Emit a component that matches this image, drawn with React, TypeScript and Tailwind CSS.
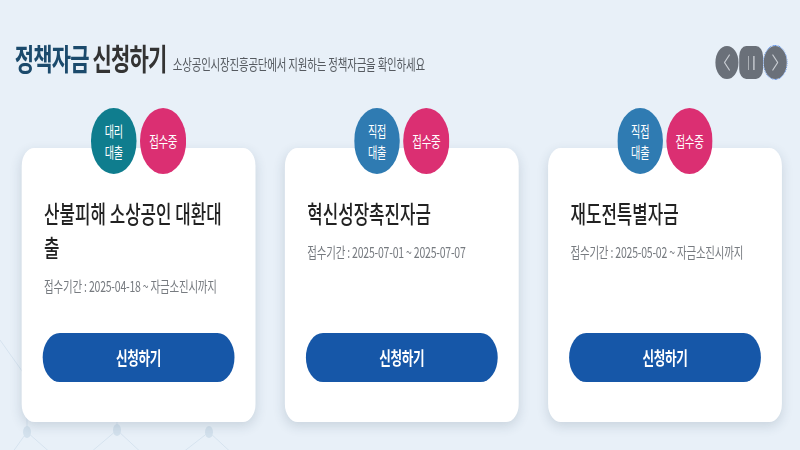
import React from "react";

type Card = {
  type: React.ReactNode;
  typeColor: string;
  title: React.ReactNode;
  period: string;
};

const cards: Card[] = [
  {
    type: (
      <>
        대리
        <br />
        대출
      </>
    ),
    typeColor: "bg-[#0f7d8e]",
    title: (
      <>
        산불피해 소상공인 대환대
        <br />출
      </>
    ),
    period: "접수기간 : 2025-04-18 ~ 자금소진시까지",
  },
  {
    type: (
      <>
        직접
        <br />
        대출
      </>
    ),
    typeColor: "bg-[#2f7bb2]",
    title: "혁신성장촉진자금",
    period: "접수기간 : 2025-07-01 ~ 2025-07-07",
  },
  {
    type: (
      <>
        직접
        <br />
        대출
      </>
    ),
    typeColor: "bg-[#2f7bb2]",
    title: "재도전특별자금",
    period: "접수기간 : 2025-05-02 ~ 자금소진시까지",
  },
];

function Chevron({ dir }: { dir: "left" | "right" }) {
  return (
    <svg width="11" height="17" viewBox="0 0 11 17" fill="none">
      <path
        d={dir === "left" ? "M9 1 L2 8.5 L9 16" : "M2 1 L9 8.5 L2 16"}
        stroke="#c8ccd2"
        strokeWidth="1.4"
        strokeLinecap="round"
        strokeLinejoin="round"
      />
    </svg>
  );
}

export default function App() {
  return (
    <div
      className="relative w-[800px] h-[450px] overflow-hidden bg-[#e8f0f8]"
      style={{ fontFamily: '"Noto Sans CJK KR", "Noto Sans", sans-serif' }}
    >
      <svg
        className="absolute inset-0"
        width="800"
        height="450"
        viewBox="0 0 800 450"
        fill="none"
      >
        <g stroke="#d6e3ef" strokeWidth="1">
          <path d="M0 340 L27 378 L27 432 L0 470" />
          <path d="M27 432 L70 470" />
          <path d="M117 430 L70 470" />
          <path d="M117 430 L160 470" />
          <path d="M209 432 L160 470" />
          <path d="M209 432 L250 470" />
          <path d="M117 430 L117 395" />
        </g>
        <g fill="#d3e1ed">
          <ellipse cx="27" cy="432" rx="4" ry="6" />
          <ellipse cx="117" cy="430" rx="4" ry="6" />
          <ellipse cx="209" cy="432" rx="4" ry="6" />
        </g>
      </svg>

      <div className="relative w-[1143px] h-[450px] origin-top-left scale-x-[0.7]">
        <div className="flex items-start justify-between pl-[21px] pr-[19px] pt-[40px]">
          <div className="flex items-baseline gap-[9px]">
            <h1 className="text-[30px] leading-[34px] font-bold tracking-[-1.2px]">
              <span className="text-[#1b4a6c]">정책자금</span>{" "}
              <span className="text-[#333333]">신청하기</span>
            </h1>
            <p className="text-[15px] leading-[20px] tracking-[-0.3px] text-[#555a60]">
              소상공인시장진흥공단에서 지원하는 정책자금을 확인하세요
            </p>
          </div>
          <div className="flex items-center gap-[1px] mt-[6px]">
            <button className="w-[33px] h-[33px] rounded-full bg-[#6a7079] flex items-center justify-center">
              <Chevron dir="left" />
            </button>
            <button className="w-[34px] h-[33px] rounded-[10px] bg-[#6a7079] flex items-center justify-center gap-[6px]">
              <span className="w-[1.5px] h-[14px] bg-[#c8ccd2]" />
              <span className="w-[1.5px] h-[14px] bg-[#c8ccd2]" />
            </button>
            <button className="w-[33px] h-[33px] rounded-full bg-[#6a7079] flex items-center justify-center outline outline-1 outline-dotted outline-[#2f6fe0] outline-offset-0">
              <Chevron dir="right" />
            </button>
          </div>
        </div>

        <div className="flex gap-[42px] pl-[31px] mt-[69px]">
          {cards.map((c, i) => (
            <div
              key={i}
              className="relative w-[334px] h-[274px] rounded-[18px] bg-white shadow-[0_4px_14px_rgba(40,60,90,0.16)] flex flex-col px-[30px] pt-[48px] pb-[40px]"
            >
              <div className="absolute left-1/2 -translate-x-1/2 -top-[40px] flex gap-[5px]">
                <div
                  className={`w-[65px] h-[66px] rounded-full ${c.typeColor} flex items-center justify-center text-center text-white text-[14.5px] leading-[21px] tracking-[-0.4px]`}
                >
                  <p>{c.type}</p>
                </div>
                <div className="w-[66px] h-[66px] rounded-full bg-[#db2f72] flex items-center justify-center text-white text-[15px] leading-[18px] tracking-[-0.5px]">
                  접수중
                </div>
              </div>
              <h2 className="text-[24px] leading-[34px] font-medium text-[#222222] pl-[2px]">
                {c.title}
              </h2>
              <p className="mt-[12px] text-[15px] leading-[20px] tracking-[-0.3px] text-[#777b80] pl-[2px]">
                {c.period}
              </p>
              <button className="mt-auto h-[49px] w-full rounded-full bg-[#1657a8] text-white text-[18px] font-semibold tracking-[-0.5px]">
                신청하기
              </button>
            </div>
          ))}
        </div>
      </div>
    </div>
  );
}
